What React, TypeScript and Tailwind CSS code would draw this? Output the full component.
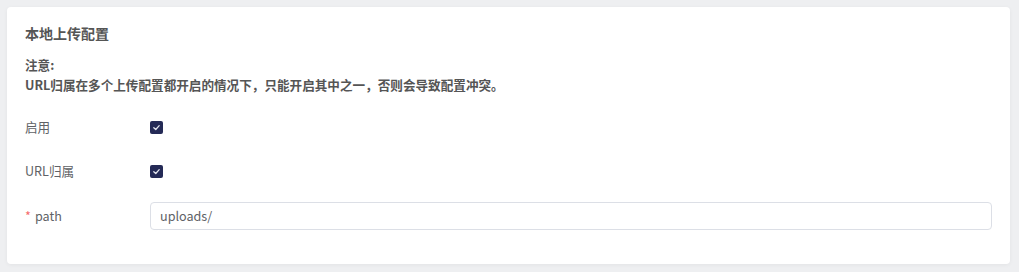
import React from "react";

const font = { fontFamily: '"Noto Sans CJK SC", "Noto Sans", sans-serif' };

function Check() {
  return (
    <span className="flex h-[13px] w-[13px] items-center justify-center rounded-[2px] bg-[#242a56]">
      <svg width="9" height="9" viewBox="0 0 10 10" fill="none">
        <path d="M2 5.2 L4.2 7.2 L8 3" stroke="#e6e8f0" strokeWidth="1.4" strokeLinecap="round" strokeLinejoin="round" />
      </svg>
    </span>
  );
}

export default function App() {
  return (
    <div className="h-[272px] w-[1019px] bg-[#eeeff1] pt-[7px] pl-[7px] pr-[9px]" style={font}>
      <div className="rounded-[4px] bg-white px-[18px] pt-[16px] pb-[34px] shadow-[0_1px_4px_rgba(0,0,0,0.05)]">
        <h2 className="text-[14px] font-bold leading-[20px] text-[#555]">本地上传配置</h2>
        <div className="mt-[12px] text-[12.6px] font-bold leading-[20px] text-[#555]">
          <p>注意:</p>
          <p>URL归属在多个上传配置都开启的情况下，只能开启其中之一，否则会导致配置冲突。</p>
        </div>
        <div className="mt-[18px] flex flex-col gap-[16.5px] text-[12.6px] text-[#606266]">
          <div className="flex h-[28px] items-center">
            <label className="w-[125px]">启用</label>
            <Check />
          </div>
          <div className="flex h-[28px] items-center">
            <label className="w-[125px]">URL归属</label>
            <Check />
          </div>
          <div className="flex h-[28px] items-center">
            <label className="w-[125px]">
              <span className="mr-[4px] text-[#f56c6c]">*</span>path
            </label>
            <div className="flex h-[28px] flex-1 items-center rounded-[4px] border border-[#dcdfe6] pl-[9px] text-[#606266]">
              uploads/
            </div>
          </div>
        </div>
      </div>
    </div>
  );
}
